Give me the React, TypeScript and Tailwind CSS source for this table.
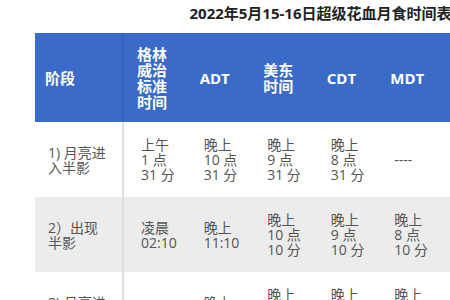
const font = { fontFamily: '"Open Sans", "Noto Sans CJK SC", sans-serif' };

type Cell = string[];

const rows: { stage: string; cells: Cell[] }[] = [
  {
    stage: "1) 月亮进入半影",
    cells: [
      ["上午", "1 点", "31 分"],
      ["晚上", "10 点", "31 分"],
      ["晚上", "9 点", "31 分"],
      ["晚上", "8 点", "31 分"],
      ["----"],
      ["----"],
    ],
  },
  {
    stage: "2）出现半影",
    cells: [
      ["凌晨", "02:10"],
      ["晚上", "11:10"],
      ["晚上", "10 点", "10 分"],
      ["晚上", "9 点", "10 分"],
      ["晚上", "8 点", "10 分"],
      ["晚上", "7 点", "10 分"],
    ],
  },
  {
    stage: "3) 月亮进入本影",
    cells: [
      ["02:28"],
      ["晚上", "11:28"],
      ["晚上", "10 点", "28 分"],
      ["晚上", "9 点", "28 分"],
      ["晚上", "8 点", "28 分"],
      ["晚上", "7 点", "28 分"],
    ],
  },
];

const heads: string[][] = [
  ["格林", "威治", "标准", "时间"],
  ["ADT"],
  ["美东", "时间"],
  ["CDT"],
  ["MDT"],
  ["PDT"],
];

export default function App() {
  return (
    <div className="w-[450px] h-[300px] overflow-hidden bg-white" style={font}>
      <div className="ml-[35px] w-[571px]">
        {/* Title */}
        <h1 className="pt-[3px] h-[33px] text-center text-[15px] font-bold text-[#222] leading-[20px]">
          2022年5月15-16日超级花血月食时间表
        </h1>

        <table className="table-fixed border-collapse w-[469.5px]">
          <colgroup>
            <col className="w-[88px]" />
            {heads.map((_, i) => (
              <col key={i} className="w-[63.5px]" />
            ))}
          </colgroup>
          <thead>
            <tr className="bg-[#3b6bc8] text-white text-[15px] font-bold leading-[16px] h-[89px]">
              <th className="text-left align-middle pl-[10px] border-r-2 border-[#3563bb]">阶段</th>
              {heads.map((h, i) => (
                <th key={i} className="text-left align-middle pl-[13px]">
                  {h.map((l, j) => (
                    <div key={j}>{l}</div>
                  ))}
                </th>
              ))}
            </tr>
          </thead>
          <tbody>
            {rows.map((r, i) => (
              <tr
                key={i}
                className={`h-[75px] text-[14px] leading-[15px] text-[#555] ${i % 2 === 1 ? "bg-[#ececec]" : "bg-white"}`}
              >
                <td className="align-middle pl-[13px] pr-[14px] border-r-2 border-[#dedede]">{r.stage}</td>
                {r.cells.map((c, j) => (
                  <td key={j} className="align-middle pl-[17px] pr-[2px]">
                    {c.map((l, k) => (
                      <div key={k} className="whitespace-nowrap">{l}</div>
                    ))}
                  </td>
                ))}
              </tr>
            ))}
          </tbody>
        </table>
      </div>
    </div>
  );
}
